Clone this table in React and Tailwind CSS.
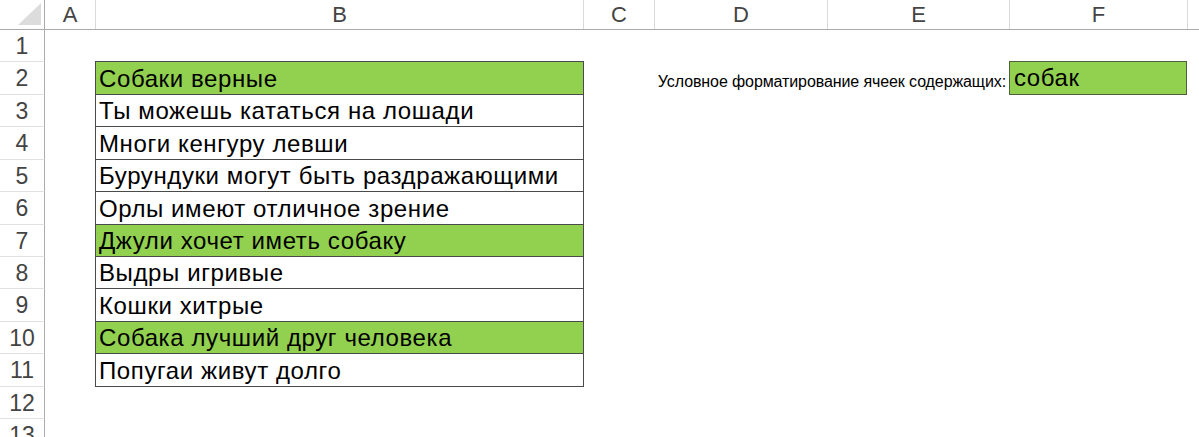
import React from 'react';

const cols = [
  { label: 'A', w: 'w-[51px]' },
  { label: 'B', w: 'w-[488px]' },
  { label: 'C', w: 'w-[71px]' },
  { label: 'D', w: 'w-[173px]' },
  { label: 'E', w: 'w-[182px]' },
  { label: 'F', w: 'w-[178px]' },
];

// row heights include the 1px bottom line
const rows = [
  { n: 1, h: 'h-[32px]' },
  { n: 2, h: 'h-[33px]', text: 'Собаки верные', green: true },
  { n: 3, h: 'h-[32px]', text: 'Ты можешь кататься на лошади' },
  { n: 4, h: 'h-[33px]', text: 'Многи кенгуру левши' },
  { n: 5, h: 'h-[32px]', text: 'Бурундуки могут быть раздражающими' },
  { n: 6, h: 'h-[33px]', text: 'Орлы имеют отличное зрение' },
  { n: 7, h: 'h-[32px]', text: 'Джули хочет иметь собаку', green: true },
  { n: 8, h: 'h-[32px]', text: 'Выдры игривые' },
  { n: 9, h: 'h-[33px]', text: 'Кошки хитрые' },
  { n: 10, h: 'h-[32px]', text: 'Собака лучший друг человека', green: true },
  { n: 11, h: 'h-[33px]', text: 'Попугаи живут долго' },
  { n: 12, h: 'h-[32px]' },
  { n: 13, h: 'h-[32px]' },
];

const Corner = () => (
  <svg width="44" height="29" viewBox="0 0 44 29">
    <polygon points="41,3 41,25 18,25" fill="#dcdcdc" />
  </svg>
);

const BodyRow = ({ row }) => {
  const inBlock = row.text !== undefined;
  return (
    <div className={`flex ${row.h}`}>
      {/* row number */}
      <div className="w-[45px] shrink-0 flex items-center justify-center pt-[1px] border-r border-b border-r-[#ababab] border-b-[#e1e1e1] text-[23px] text-[#444]">
        {row.n}
      </div>
      <div className="w-[50px] shrink-0" />
      {/* column B */}
      {inBlock ? (
        <div
          className={`w-[489px] shrink-0 flex items-center pl-[3px] pt-[1px] border-l border-r border-b border-[#4a4a4a] text-[24px] tracking-[0.6px] text-black whitespace-nowrap ${
            row.green ? 'bg-[#92d050]' : 'bg-white'
          }`}
        >
          {row.text}
        </div>
      ) : (
        <div className={`w-[489px] shrink-0 ${row.n === 1 ? 'border-b border-[#4a4a4a]' : ''}`} />
      )}
      <div className="w-[71px] shrink-0" />
      {row.n === 2 ? (
        <>
          <div className="w-[354px] shrink-0 flex items-center justify-end pr-[3px] pt-[6px] text-[16px] tracking-[-0.1px] text-black whitespace-nowrap">
            Условное форматирование ячеек содержащих:
          </div>
          <div className="w-[178px] shrink-0 flex items-center pl-[4px] border-l border-r border-b border-[#4f5f3a] bg-[#92d050] text-[24px] tracking-[0.6px] text-black">
            собак
          </div>
        </>
      ) : row.n === 1 ? (
        <>
          <div className="w-[354px] shrink-0" />
          <div className="w-[178px] shrink-0 border-b border-[#4f5f3a]" />
        </>
      ) : (
        <div className="w-[532px] shrink-0" />
      )}
      <div className="flex-1" />
    </div>
  );
};

export default function App() {
  return (
    <div
      className="w-[1199px] h-[437px] overflow-hidden bg-white select-none"
      style={{ fontFamily: '"Liberation Sans", Arial, sans-serif' }}
    >
      {/* column headers */}
      <div className="flex h-[30px] border-b border-[#ababab]">
        <div className="w-[45px] shrink-0 border-r border-[#ababab]">
          <Corner />
        </div>
        {cols.map((c) => (
          <div
            key={c.label}
            className={`${c.w} shrink-0 flex items-center justify-center border-r border-[#d9d9d9] text-[22px] text-[#444]`}
          >
            {c.label}
          </div>
        ))}
        <div className="flex-1" />
      </div>

      {rows.map((row) => (
        <BodyRow key={row.n} row={row} />
      ))}
    </div>
  );
}
